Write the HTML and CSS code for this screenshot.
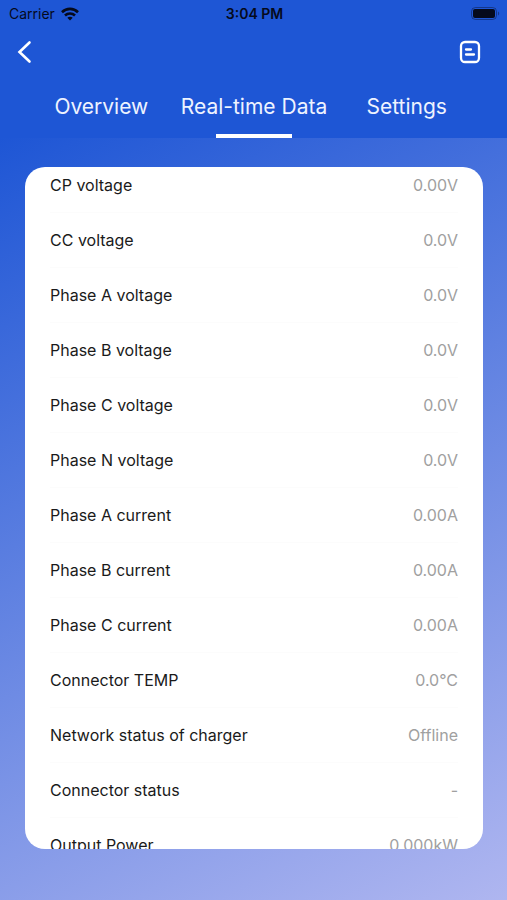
FILE: index.html
```html
<!DOCTYPE html>
<html lang="en">
<head>
<meta charset="utf-8">
<meta name="viewport" content="width=device-width, initial-scale=1">
<title>Real-time Data</title>
<link rel="stylesheet" href="styles.css">
</head>
<body>
<header class="header">
  <div class="status">
    <div class="carrier">
      <span>Carrier</span>
      <svg class="wifi" width="18" height="14" viewBox="0 0 18 14" fill="none" stroke="currentColor" stroke-width="2.6" aria-hidden="true">
        <path d="M1 5.2C5.5.8 12.500.8 17 5.200"/>
        <path d="M4 8.500C6.800 5.800 11.200 5.800 14 8.500"/>
        <path d="M9 13.500 6.300 10.700C7.800 9.400 10.200 9.400 11.700 10.700Z" fill="currentColor" stroke="none"/>
      </svg>
    </div>
    <span class="time">3:04 PM</span>
    <svg class="battery" width="29" height="14" viewBox="0 0 29 14" aria-hidden="true">
      <rect x=".5" y=".5" width="25" height="12" rx="4" fill="none" stroke="currentColor" stroke-opacity=".4"/>
      <rect x="2" y="2" width="22" height="9" rx="2" fill="currentColor"/>
      <path d="M27 4.500C28.600 5 28.600 8 27 8.500Z" fill="currentColor" fill-opacity=".4"/>
    </svg>
  </div>
  <div class="toolbar">
    <button class="icon-button" type="button" aria-label="Back">
      <svg width="24" height="24" viewBox="0 0 24 24" fill="none" stroke="currentColor" stroke-width="2.600" stroke-linecap="round"><path d="M17.500 2.500 7.500 12 17.500 21.500"/></svg>
    </button>
    <button class="icon-button" type="button" aria-label="Records">
      <svg width="24" height="24" viewBox="0 0 24 24" fill="none" stroke="currentColor" stroke-width="2.300" stroke-linecap="round"><rect x="3" y="2" width="18" height="20" rx="4"/><path d="M8 9.500h5M8 14.500h8"/></svg>
    </button>
  </div>
  <nav class="tabs">
    <a class="tab" href="#overview">Overview</a>
    <a class="tab active" href="#data" aria-current="page">Real-time Data</a>
    <a class="tab" href="#settings">Settings</a>
  </nav>
</header>
<main class="content">
  <section class="card" id="data">
    <table class="readings">
      <tbody>
        <tr><th scope="row">CP voltage</th><td>0.00V</td></tr>
        <tr><th scope="row">CC voltage</th><td>0.0V</td></tr>
        <tr><th scope="row">Phase A voltage</th><td>0.0V</td></tr>
        <tr><th scope="row">Phase B voltage</th><td>0.0V</td></tr>
        <tr><th scope="row">Phase C voltage</th><td>0.0V</td></tr>
        <tr><th scope="row">Phase N voltage</th><td>0.0V</td></tr>
        <tr><th scope="row">Phase A current</th><td>0.00A</td></tr>
        <tr><th scope="row">Phase B current</th><td>0.00A</td></tr>
        <tr><th scope="row">Phase C current</th><td>0.00A</td></tr>
        <tr><th scope="row">Connector TEMP</th><td>0.0°C</td></tr>
        <tr><th scope="row">Network status of charger</th><td>Offline</td></tr>
        <tr><th scope="row">Connector status</th><td>-</td></tr>
        <tr><th scope="row">Output Power</th><td>0.000kW</td></tr>
      </tbody>
    </table>
  </section>
</main>
</body>
</html>
```
FILE: styles.css
```css
* {
  box-sizing: border-box;
}

body {
  margin: 0;
  height: 100vh;
  display: flex;
  flex-direction: column;
  overflow: hidden;
  font-family: Inter, "Liberation Sans", sans-serif;
  background: #1e56d5;
}

.header {
  flex: none;
  background: #1e56d5;
  color: #fff;
}

.status {
  display: grid;
  grid-template-columns: 1fr auto 1fr;
  align-items: center;
  height: 27px;
  padding: 0 7px 0 9px;
  color: #050a1c;
  font-size: 14px;
}

.carrier {
  display: flex;
  align-items: center;
  gap: 6px;
}

.time {
  font-weight: 600;
}

.battery {
  justify-self: end;
}

.toolbar {
  display: flex;
  justify-content: space-between;
  align-items: center;
  height: 50px;
  padding: 0 25px 0 12px;
}

.icon-button {
  display: flex;
  padding: 0;
  border: 0;
  background: none;
  color: #fff;
}

.tabs {
  display: grid;
  grid-template-columns: repeat(3, 1fr);
  height: 61px;
  padding: 0 24px 0 25px;
}

.tab {
  color: #eef3ff;
  font-size: 21px;
  line-height: 60px;
  text-align: center;
  white-space: nowrap;
  text-decoration: none;
}

.active {
  background: linear-gradient(#fff, #fff) center bottom / 50% 4px no-repeat;
}

.content {
  flex: 1;
  min-height: 0;
  display: flex;
  flex-direction: column;
  padding: 29px 24px 51px 25px;
  background: linear-gradient(153deg, #1e56d5, #afb6f0);
}

.card {
  flex: 1;
  min-height: 0;
  overflow: hidden;
  border-radius: 20px;
  background: #fff;
}

.readings {
  width: 100%;
  margin-top: -9px;
  padding: 0 25px;
  border-spacing: 0;
  font-size: 16px;
}

.readings th,
.readings td {
  height: 55px;
  padding: 0;
  border-bottom: 1px solid #fcfcfc;
  font-weight: 400;
}

.readings th {
  color: #1a1a1a;
  text-align: left;
}

.readings td {
  color: #a0a0a0;
  text-align: right;
}
```
